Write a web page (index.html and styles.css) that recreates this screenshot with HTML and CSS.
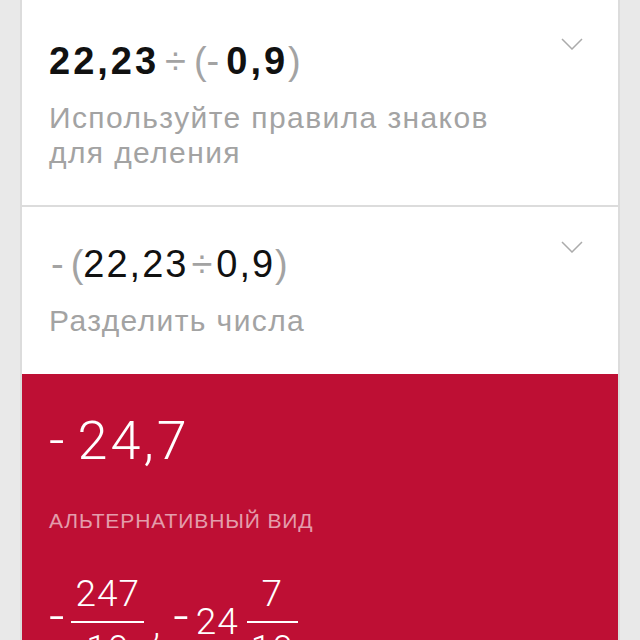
FILE: index.html
```html
<!DOCTYPE html>
<html lang="ru">
<head>
    <meta charset="UTF-8">
    <meta name="viewport" content="width=device-width, initial-scale=1.0">
    <title>Шаги решения</title>
    <link rel="stylesheet" href="styles.css">
</head>
<body>
    <div class="card">
        <section class="step">
            <div class="step-head">
                <div class="expr expr-bold">
                    <span>22,23</span><span class="op op-div">÷</span><span class="op">(</span><span class="op op-minus">-</span><span>0,9</span><span class="op">)</span>
                </div>
                <svg class="chevron" width="22" height="12" viewBox="0 0 22 12">
                    <polyline points="1,1 11,11 21,1" />
                </svg>
            </div>
            <p class="hint">Используйте правила знаков<br>для деления</p>
        </section>

        <section class="step">
            <div class="step-head">
                <div class="expr">
                    <span class="op op-minus">-</span><span class="op">(</span><span>22,23</span><span class="op op-div">÷</span><span>0,9</span><span class="op">)</span>
                </div>
                <svg class="chevron" width="22" height="12" viewBox="0 0 22 12">
                    <polyline points="1,1 11,11 21,1" />
                </svg>
            </div>
            <p class="hint">Разделить числа</p>
        </section>

        <section class="result">
            <div class="answer"><span class="answer-minus">-</span>24,7</div>
            <div class="alt-label">АЛЬТЕРНАТИВНЫЙ ВИД</div>
            <div class="alt-forms">
                <span class="sign">-</span>
                <span class="frac">
                    <span class="num">247</span>
                    <span class="den">10</span>
                </span>
                <span class="comma">,</span>
                <span class="sign">-</span>
                <span class="whole">24</span>
                <span class="frac">
                    <span class="num">7</span>
                    <span class="den">10</span>
                </span>
            </div>
        </section>
    </div>
</body>
</html>
```

FILE: styles.css
```css
body {
    font-family: 'Liberation Sans', Arial, sans-serif;
    background-color: #e9e9e9;
    color: #111;
    margin: 0;
    padding: 0;
    overflow: hidden;
}

.card {
    margin: 0 20px;
    min-height: 100vh;
    background-color: #fff;
    border-left: 2px solid #dcdcdc;
    border-right: 2px solid #dcdcdc;
    display: flex;
    flex-direction: column;
}

.step {
    padding: 42px 35px 35px 27px;
    border-bottom: 2px solid #dcdcdc;
}

.step + .step {
    padding-top: 38px;
    padding-bottom: 36px;
    border-bottom: none;
}

.step-head {
    display: flex;
    justify-content: space-between;
    align-items: flex-start;
}

.expr {
    display: flex;
    align-items: baseline;
    font-size: 38px;
    line-height: 38px;
    letter-spacing: 2px;
}

.expr-bold {
    font-weight: 700;
    letter-spacing: 3px;
}

.op {
    color: #a3a3a3;
    font-weight: 400;
    letter-spacing: 0;
}

.op-div {
    margin: 0 4px 0 3px;
}

.expr-bold .op-div {
    margin: 0 8px 0 6px;
}

.op-minus {
    margin: 0 7px 0 2px;
}

.expr-bold .op-minus {
    margin: 0 7px 0 0;
}

.chevron {
    margin-top: -4px;
    fill: none;
    stroke: #ababab;
    stroke-width: 1.5;
}

.hint {
    margin: 20px 0 0;
    font-size: 30px;
    line-height: 35px;
    letter-spacing: 1.4px;
    color: #a3a3a3;
}

.result {
    flex: 1;
    background-color: #be0f34;
    color: #fff;
    padding: 40px 27px 0;
    font-family: Roboto, 'Liberation Sans', sans-serif;
}

.answer {
    font-size: 54px;
    line-height: 54px;
    font-weight: 300;
    letter-spacing: 3px;
}

.answer-minus {
    margin-right: 10px;
}

.alt-label {
    margin-top: 42px;
    font-family: 'Liberation Sans', Arial, sans-serif;
    font-size: 21px;
    line-height: 21px;
    letter-spacing: 0.9px;
    color: rgba(255, 255, 255, 0.6);
}

.alt-forms {
    margin-top: 44px;
    display: flex;
    align-items: center;
    font-size: 37px;
    line-height: 37px;
    font-weight: 300;
    letter-spacing: 1px;
}

.sign {
    font-size: 54px;
    line-height: 37px;
    margin: -10px 6px 0 0;
}

.frac {
    display: flex;
    flex-direction: column;
    align-items: center;
}

.num {
    padding: 0 4px 9px;
    border-bottom: 2px solid #fff;
    align-self: stretch;
    text-align: center;
}

.den {
    padding: 7px 4px 0;
}

.comma {
    margin: 5px 12px 0 9px;
}

.whole {
    margin-right: 8px;
}
```
